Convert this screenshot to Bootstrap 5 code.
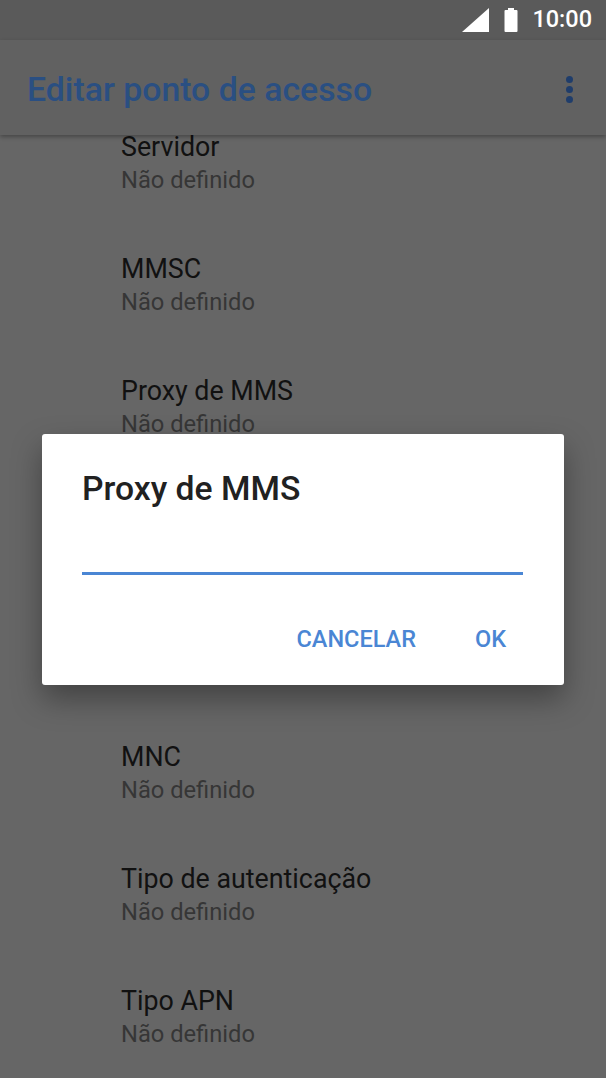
<!DOCTYPE html>
<html lang="pt">
<head>
    <meta charset="UTF-8">
    <meta name="viewport" content="width=device-width, initial-scale=1.0">
    <title>Editar ponto de acesso</title>
    <link href="https://cdn.jsdelivr.net/npm/bootstrap@5.3.0/dist/css/bootstrap.min.css" rel="stylesheet">
    <script src="https://cdn.jsdelivr.net/npm/bootstrap@5.3.0/dist/js/bootstrap.bundle.min.js"></script>
    <style>
        html, body {
            height: 1078px;
            overflow: hidden;
        }

        body {
            font-family: Roboto, "Liberation Sans", sans-serif;
            background-color: #666666;
            position: relative;
        }

        /* status bar */
        .status-strip {
            height: 40px;
            background: #5a5a5a;
            padding-right: 14px;
            gap: 14px;
        }

        .status-time {
            font-size: 23.5px;
            font-weight: 500;
            color: #fff;
        }

        /* app bar */
        .app-strip {
            height: 95px;
            background: #616161;
            box-shadow: 0 2px 4px rgba(0, 0, 0, 0.3);
            padding: 6px 27px 0 27px;
            z-index: 2;
            position: relative;
        }

        .app-title {
            font-size: 33.8px;
            font-weight: 500;
            color: #2a4f82;
            margin: 0;
        }

        .more-dots {
            gap: 3px;
            margin-right: 6px;
            margin-bottom: 2px;
        }

        .more-dots span {
            width: 7px;
            height: 7px;
            border-radius: 50%;
            background: #1f3d6b;
        }

        /* settings list */
        .apn-list {
            padding: 0 0 0 121px;
            margin-top: -3px;
        }

        .apn-row {
            height: 122px;
        }

        .apn-name {
            font-size: 26.8px;
            line-height: 30px;
            color: #111;
        }

        .apn-value {
            font-size: 23.7px;
            line-height: 36px;
            color: #363636;
        }

        /* dialog */
        .dialog-box {
            position: absolute;
            left: 42px;
            top: 434px;
            width: 522px;
            height: 251px;
            background: #fff;
            border-radius: 3px;
            box-shadow: 0 14px 30px rgba(0, 0, 0, 0.35);
            padding: 0 41px 0 40px;
            z-index: 5;
        }

        .dialog-title {
            font-size: 33.7px;
            font-weight: 500;
            color: #212121;
            margin: 35px 0 0 0;
            line-height: 40px;
        }

        .dialog-input {
            height: 36px;
            margin-top: 30px;
            border-bottom: 3px solid #4a86d4;
        }

        .dialog-actions {
            margin-top: 49px;
            margin-right: 17px;
            gap: 59px;
        }

        .dialog-link {
            font-size: 23.5px;
            font-weight: 500;
            line-height: 30px;
            color: #4a86d4;
        }
    </style>
</head>

<body>

    <!-- Status bar -->
    <div class="status-strip d-flex justify-content-end align-items-center">
        <svg width="28" height="26" viewBox="0 0 28 26"><polygon points="0,25 27,1 27,25" fill="#fff"/></svg>
        <svg width="14" height="26" viewBox="0 0 14 26"><path d="M4 1h6v2h2.500a1 1 0 0 1 1 1V24a1 1 0 0 1-1 1H1.500a1 1 0 0 1-1-1V4a1 1 0 0 1 1-1H4z" fill="#fff"/></svg>
        <span class="status-time">10:00</span>
    </div>

    <!-- App bar -->
    <div class="app-strip d-flex justify-content-between align-items-center">
        <h1 class="app-title">Editar ponto de acesso</h1>
        <div class="more-dots d-flex flex-column">
            <span></span>
            <span></span>
            <span></span>
        </div>
    </div>

    <!-- List -->
    <div class="apn-list">
        <div class="apn-row"><div class="apn-name">Servidor</div><div class="apn-value">Não definido</div></div>
        <div class="apn-row"><div class="apn-name">MMSC</div><div class="apn-value">Não definido</div></div>
        <div class="apn-row"><div class="apn-name">Proxy de MMS</div><div class="apn-value">Não definido</div></div>
        <!-- rows behind the dialog -->
        <div class="apn-row"></div>
        <div class="apn-row"></div>
        <div class="apn-row"><div class="apn-name">MNC</div><div class="apn-value">Não definido</div></div>
        <div class="apn-row"><div class="apn-name">Tipo de autenticação</div><div class="apn-value">Não definido</div></div>
        <div class="apn-row"><div class="apn-name">Tipo APN</div><div class="apn-value">Não definido</div></div>
    </div>

    <!-- Dialog -->
    <div class="dialog-box">
        <h2 class="dialog-title">Proxy de MMS</h2>
        <div class="dialog-input"></div>
        <div class="dialog-actions d-flex justify-content-end">
            <span class="dialog-link">CANCELAR</span>
            <span class="dialog-link">OK</span>
        </div>
    </div>

</body>

</html>
